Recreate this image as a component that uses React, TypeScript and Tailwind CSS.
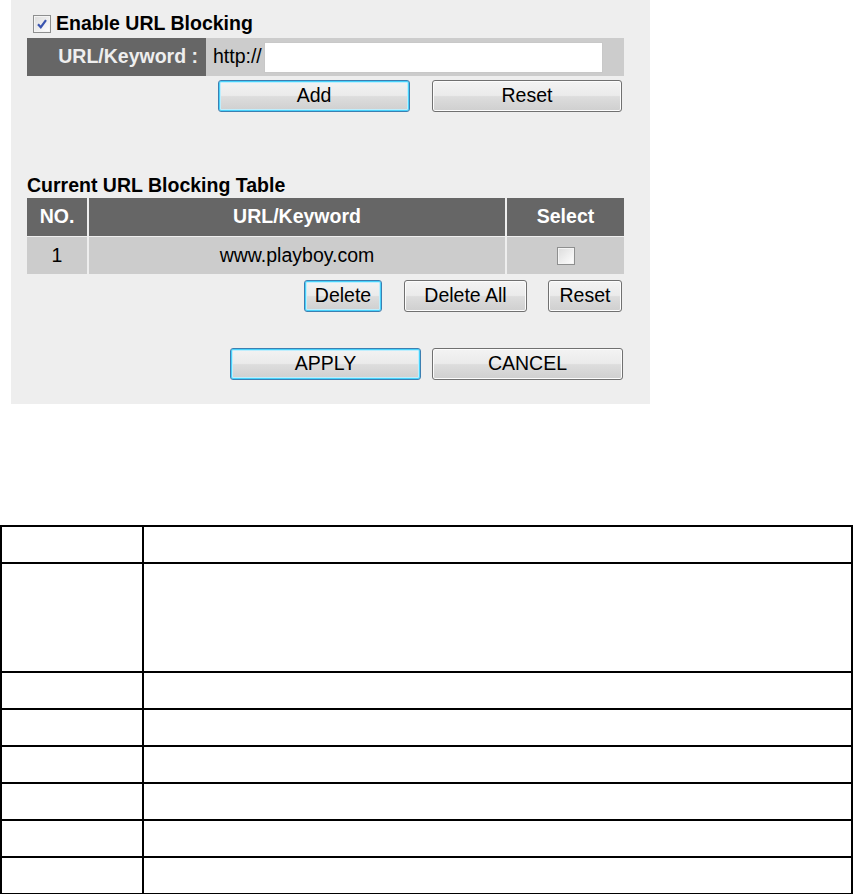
const font = "font-['Liberation_Sans',Arial,sans-serif]";

function Btn({ label, focus, className }: { label: string; focus?: boolean; className: string }) {
  return (
    <button
      type="button"
      className={
        "flex items-center justify-center rounded-[3px] border text-[19.5px] leading-none text-black bg-[linear-gradient(#f3f3f3_0%,#ebebeb_48%,#dddddd_52%,#cfcfcf_100%)] " +
        (focus
          ? "border-[#3c7fb1] shadow-[inset_0_0_0_1px_#48d2fb,inset_0_0_0_2px_#bfeefd]"
          : "border-[#707070] shadow-[inset_0_0_0_1px_#fcfcfc]") +
        " " +
        className
      }
    >
      {label}
    </button>
  );
}

function Check({ checked }: { checked?: boolean }) {
  return (
    <span className="flex h-[18px] w-[18px] items-center justify-center border border-[#8e8f8f] bg-[linear-gradient(135deg,#dcdcdc,#ffffff)] shadow-[inset_0_0_0_1px_#f4f4f4]">
      {checked && (
        <svg width="12" height="12" viewBox="0 0 12 12">
          <path d="M2 6.2 L4.8 9.2 L10 2.2" fill="none" stroke="#3a55b0" strokeWidth="2.2" />
        </svg>
      )}
    </span>
  );
}

const rows = [37, 109, 37, 37, 37, 37, 37, 37];

export default function App() {
  return (
    <div className={"h-[894px] w-[853px] bg-white " + font}>
      <div className="ml-[11px] flex h-[404px] w-[639px] flex-col bg-[#eeeeee] pl-[16px]">
        <div className="mt-[14px] flex h-[20px] items-center gap-[5px] pl-[6px]">
          <Check checked />
          <span className="text-[19.5px] font-bold leading-none text-black">Enable URL Blocking</span>
        </div>

        <div className="mt-[4px] flex h-[38px] w-[597px]">
          <div className="flex w-[179px] items-center justify-end bg-[#666666] pr-[8px] text-[19.5px] font-bold text-[#eeeeee]">
            URL/Keyword :
          </div>
          <div className="flex flex-1 items-center bg-[#cccccc] pl-[7px]">
            <span className="text-[19.5px] text-black">http://</span>
            <div className="ml-[2px] h-[31px] w-[339px] border border-[#c8c8c8] bg-white" />
          </div>
        </div>

        <div className="mt-[4px] flex h-[32px]">
          <Btn label="Add" focus className="ml-[191px] w-[192px]" />
          <Btn label="Reset" className="ml-[22px] w-[190px]" />
        </div>

        <div className="mt-[61px] text-[19.5px] font-bold leading-[24px] text-black">Current URL Blocking Table</div>

        <div className="mt-[1px] w-[597px] text-[19.5px]">
          <div className="flex h-[38px] gap-[2px] font-bold text-white">
            <div className="flex w-[60px] items-center justify-center bg-[#666666]">NO.</div>
            <div className="flex w-[416px] items-center justify-center bg-[#666666]">URL/Keyword</div>
            <div className="flex flex-1 items-center justify-center bg-[#666666]">Select</div>
          </div>
          <div className="mt-[1px] flex h-[37px] gap-[2px] text-black">
            <div className="flex w-[60px] items-center justify-center bg-[#cccccc]">1</div>
            <div className="flex w-[416px] items-center justify-center bg-[#cccccc]">www.playboy.com</div>
            <div className="flex flex-1 items-center justify-center bg-[#cccccc]">
              <Check />
            </div>
          </div>
        </div>

        <div className="mt-[6px] flex h-[32px]">
          <Btn label="Delete" focus className="ml-[277px] w-[78px]" />
          <Btn label="Delete All" className="ml-[22px] w-[123px]" />
          <Btn label="Reset" className="ml-[21px] w-[74px]" />
        </div>

        <div className="mt-[36px] flex h-[32px]">
          <Btn label="APPLY" focus className="ml-[203px] w-[191px]" />
          <Btn label="CANCEL" className="ml-[11px] w-[191px]" />
        </div>
      </div>

      <div className="mt-[121px] flex w-[853px] flex-col border-t-2 border-black">
        {rows.map((h, i) => (
          <div
            key={i}
            className="flex border-b-2 border-l-2 border-r-2 border-black"
            style={{ height: h }}
          >
            <div className="w-[142px] border-r-2 border-black" />
            <div className="flex-1" />
          </div>
        ))}
      </div>
    </div>
  );
}
